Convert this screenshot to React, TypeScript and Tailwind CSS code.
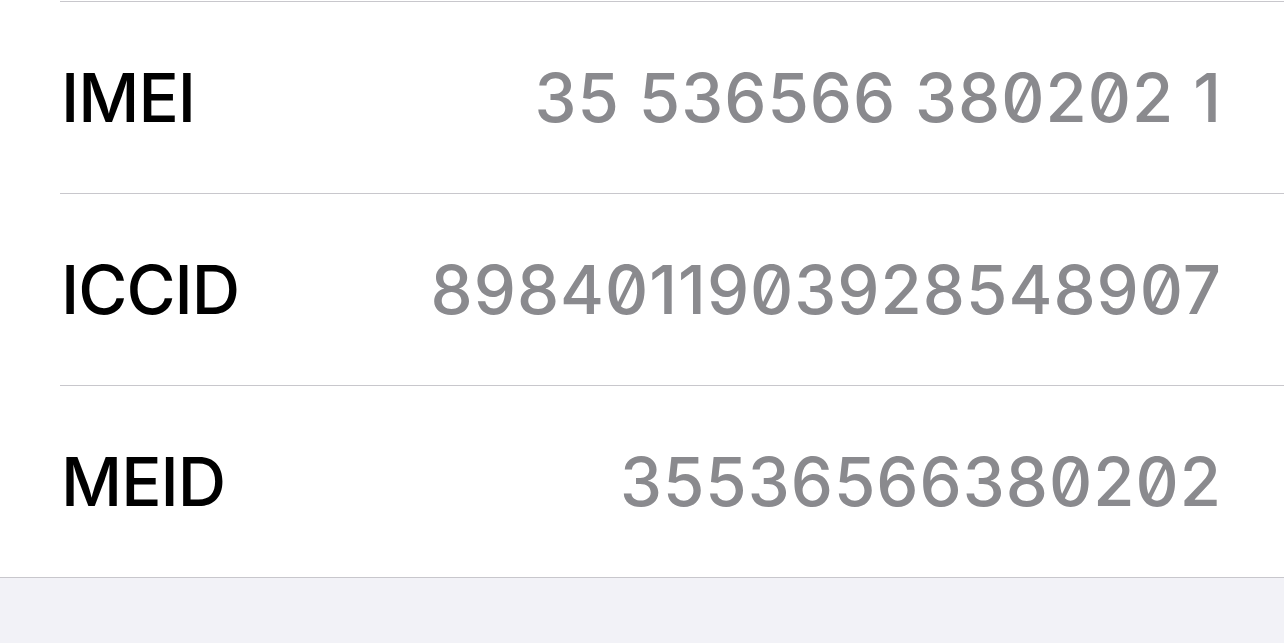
const rows = [
  { label: 'IMEI', value: '35 536566 380202 1' },
  { label: 'ICCID', value: '8984011903928548907' },
  { label: 'MEID', value: '35536566380202' },
]

export default function App() {
  return (
    <div className="min-h-[643px] w-full bg-[#f2f2f7] font-['Inter','Noto_Sans',sans-serif]">
      <div className="bg-white pt-px border-b border-[#c8c7cc]">
        <div className="ml-[60px]">
          {rows.map((row) => (
            <div
              key={row.label}
              className="flex h-[192px] items-center justify-between border-t border-[#c8c7cc] pl-[1px] pr-[62px]"
            >
              <span className="text-[67px] font-medium leading-none text-black tracking-[-1px]">{row.label}</span>
              <span className="text-[67px] font-medium leading-none text-[#8a8a8e] proportional-nums slashed-zero tracking-[1px]">
                {row.value}
              </span>
            </div>
          ))}
        </div>
      </div>
    </div>
  )
}
